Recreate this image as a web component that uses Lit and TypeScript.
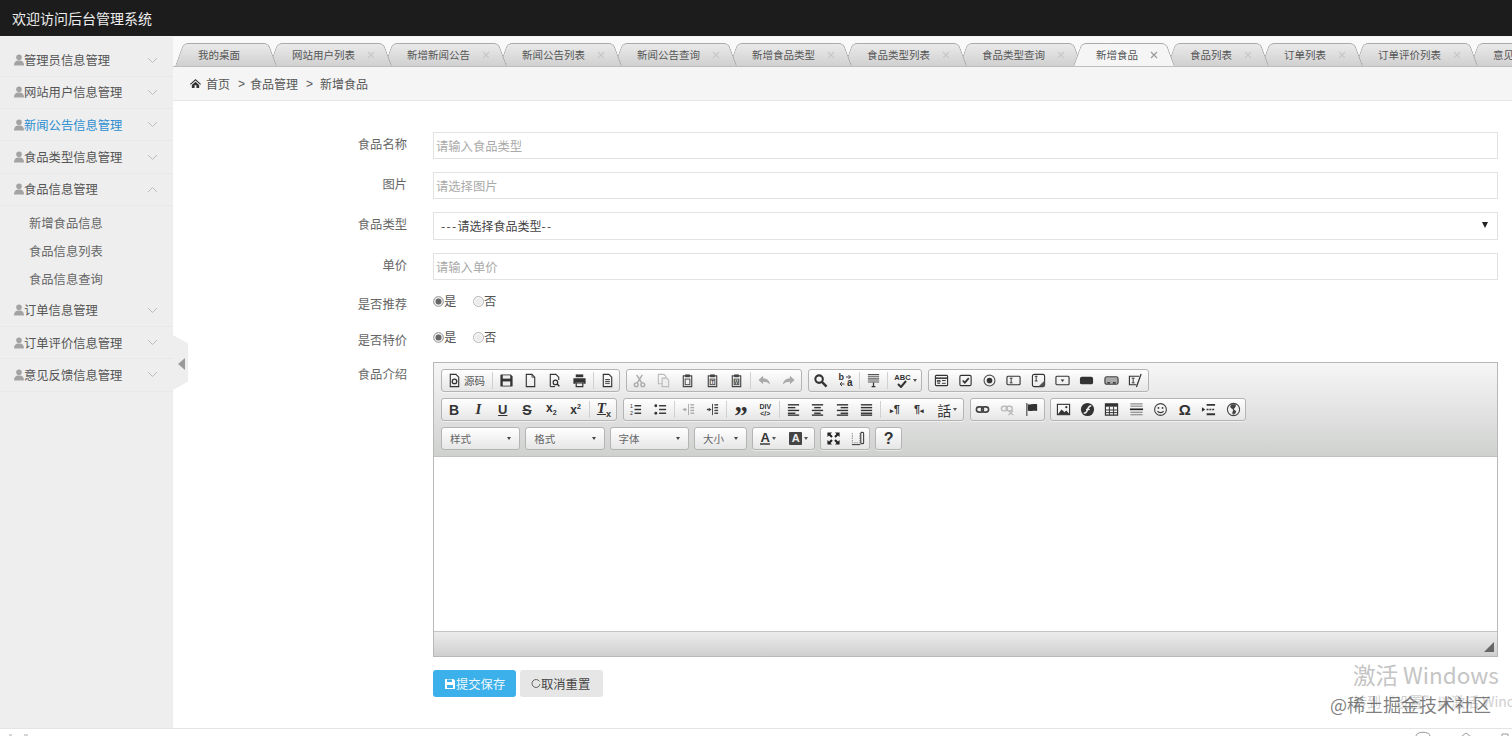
import { LitElement, html, css, svg, unsafeCSS } from 'lit';
import { customElement } from 'lit/decorators.js';

const FONT = unsafeCSS(`"Noto Sans CJK SC", "Liberation Sans", sans-serif`);

const TABS = [
  { label: '我的桌面', close: false },
  { label: '网站用户列表', close: true },
  { label: '新增新闻公告', close: true },
  { label: '新闻公告列表', close: true },
  { label: '新闻公告查询', close: true },
  { label: '新增食品类型', close: true },
  { label: '食品类型列表', close: true },
  { label: '食品类型查询', close: true },
  { label: '新增食品', close: true, active: true },
  { label: '食品列表', close: true },
  { label: '订单列表', close: true },
  { label: '订单评价列表', close: true },
  { label: '意见反馈列表', close: true },
];

const MENU = [
  { label: '管理员信息管理' },
  { label: '网站用户信息管理' },
  { label: '新闻公告信息管理', blue: true },
  { label: '食品类型信息管理' },
  { label: '食品信息管理', open: true, subs: ['新增食品信息', '食品信息列表', '食品信息查询'] },
  { label: '订单信息管理' },
  { label: '订单评价信息管理' },
  { label: '意见反馈信息管理' },
];

const ic = (body: unknown) =>
  html`<svg class="ic" viewBox="0 0 16 16" fill="none" stroke="#333" stroke-width="1.2">${body}</svg>`;

const lines = (rows: [number, number, number][], color = '#333') =>
  rows.map(([x1, x2, y]) => svg`<path d="M${x1} ${y}H${x2}" stroke=${color} stroke-width="1.5" />`);

const clip = (color: string, mark: string) => svg`
  <path d="M3.5 3h9v11.500h-9z" stroke=${color} />
  <rect x="5.500" y="1.500" width="5" height="3" fill=${color} stroke="none" />
  <rect x="5.500" y="6.500" width="5" height="6" stroke=${color} stroke-width="1" />
  <text x="8" y="11.800" font-size="5.500" font-weight="700" text-anchor="middle" fill=${color} stroke="none" font-family="Liberation Sans">${mark}</text>`;

const ICONS: Record<string, unknown> = {
  source: html`${ic(svg`<path d="M3.5 1.500h6l3 3v10h-9z" /><circle cx="8" cy="9" r="2.400" stroke-width="1.400" />`)}<span class="src">源码</span>`,
  save: ic(svg`<path d="M1.500 2.500a1 1 0 0 1 1-1h10l2 2v10a1 1 0 0 1-1 1h-11a1 1 0 0 1-1-1z" fill="#333" stroke="none" /><rect x="4" y="2.500" width="8" height="3.500" fill="#eee" stroke="none" /><rect x="4" y="9" width="8" height="4.500" fill="#eee" stroke="none" />`),
  newpage: ic(svg`<path d="M3.500 1.500h6l3 3v10h-9z" /><path d="M9.500 1.500v3h3" stroke-width=".8" />`),
  preview: ic(svg`<path d="M3.500 14.500v-13h6l3 3v3" /><path d="M3.500 14.500h5" /><circle cx="9" cy="10" r="2.400" stroke-width="1.300" /><path d="m10.800 11.800 2.400 2.400" stroke-width="1.600" />`),
  print: ic(svg`<path d="M4 1.500h8v3H4z" fill="#333" stroke="none" /><path d="M1.500 5.500h13v6h-2.500v-2H4v2H1.500z" fill="#333" stroke="none" /><path d="M4.500 10.500h7v4h-7z" stroke-width="1.300" />`),
  templates: ic(svg`<path d="M3.500 1.500h6l3 3v10h-9z" /><path d="M5.500 7h5M5.500 9h5M5.500 11h5" stroke-width="1" />`),
  cut: ic(svg`<g stroke="#aaa" stroke-width="1.500"><circle cx="4.500" cy="12.500" r="2" /><circle cx="11.500" cy="12.500" r="2" /><path d="M5.500 10.700 11 2M10.500 10.700 5 2" /></g>`),
  copy: ic(svg`<g stroke="#bbb"><path d="M2.500 1.500h6l2 2v8h-8z" /><path d="M6.500 5.500h5l2 2v7h-7z" fill="#eee" /></g>`),
  paste: ic(clip('#444', '')),
  pastetext: ic(clip('#444', 'T')),
  pasteword: ic(clip('#444', 'W')),
  undo: ic(svg`<path d="M6.500 3 1.500 7.500l5 4.500V9.300c3 0 5.200.7 7.500 3-.5-4-3.400-6.600-7.500-6.800z" fill="#aaa" stroke="none" />`),
  redo: ic(svg`<path d="M9.500 3l5 4.500-5 4.500V9.300c-3 0-5.200.7-7.500 3 .5-4 3.400-6.600 7.500-6.800z" fill="#aaa" stroke="none" />`),
  find: ic(svg`<circle cx="6.500" cy="6.500" r="4" stroke-width="2.200" /><path d="m9.500 9.500 5 5" stroke-width="2.600" />`),
  replace: html`<span class="rep"><i>b</i><b>a</b><svg viewBox="0 0 15 15"><path d="M8 4h4.500M10.500 2l2 2-2 2M6.500 11H2M4 9l-2 2 2 2" fill="none" stroke="#444" /></svg></span>`,
  selectall: ic(svg`<path d="M2 1.500h12M2 3.500h12M2 5.500h12M2 7.500h12M2 9.500h12" stroke-width="1.100" stroke="#555" /><path d="M6 14.500h4M8 10v4.500" stroke-width="1.300" />`),
  spell: html`<span class="abc">ABC</span><svg class="chk" viewBox="0 0 12 8"><path d="m2 4 3 3 5-6" fill="none" stroke="#333" stroke-width="2" /></svg><span class="caret"></span>`,
  form: ic(svg`<rect x="1.500" y="2.500" width="13" height="11" rx="1" /><path d="M1.500 5.500h13" stroke-width="1.600" /><path d="M3.500 8h3v1.500h-3zM8.500 8h4M3.500 11h3M8.500 11h4" stroke-width="1" />`),
  checkbox: ic(svg`<rect x="2" y="2.500" width="12" height="11" rx="1.500" /><path d="m5 8 2.300 2.300L11.500 5.500" stroke-width="1.800" />`),
  radio: ic(svg`<circle cx="8" cy="8" r="5.800" stroke="#555" /><circle cx="8" cy="8" r="3" fill="#333" stroke="none" />`),
  textfield: ic(svg`<rect x="1" y="3.500" width="14" height="9" rx="1" /><path d="M4 5.500h3M4 10.500h3M5.500 5.500v5" stroke-width="1" />`),
  textarea: ic(svg`<rect x="1.500" y="1.500" width="13" height="13" rx="2" /><path d="M4 3.500h3M4 8.500h3M5.500 3.500v5" stroke-width="1" /><path d="M8 14.500l6.500-6.500v6.500z" fill="#555" stroke="none" />`),
  select: ic(svg`<rect x="1" y="3.500" width="14" height="9" rx="1" /><path d="M6 7h4l-2 2.500z" fill="#333" stroke="none" />`),
  button: ic(svg`<rect x="1" y="4" width="14" height="8" rx="2" fill="#333" stroke="none" />`),
  imagebutton: ic(svg`<rect x="1" y="4" width="14" height="8" rx="2" stroke="#444" stroke-width="1.300" fill="#aaa" /><path d="M3.500 10.500h3M9.500 10.500h3" stroke="#222" />`),
  hidden: ic(svg`<path d="M12 3.500H1.500v9H9" /><path d="M4 5.500h3M4 10.500h3M5.500 5.500v5" stroke-width="1" /><path d="m9 15 5-14" stroke-width="1.300" />`),
  ol: ic(svg`${lines([[7, 14, 4], [7, 14, 8], [7, 14, 12]])}<text x="2" y="6" font-size="5.500" fill="#333" stroke="none" font-family="Liberation Sans">1</text><text x="2" y="13.500" font-size="5.500" fill="#333" stroke="none" font-family="Liberation Sans">2</text>`),
  ul: ic(svg`${lines([[6.5, 14, 4], [6.5, 14, 8], [6.5, 14, 12]])}<circle cx="3" cy="4" r="1.500" fill="#333" stroke="none" /><circle cx="3" cy="12" r="1.500" fill="#333" stroke="none" />`),
  outdent: ic(svg`<path d="M8 2v12" stroke="#aaa" stroke-width="1" />${lines([[10, 14, 3], [10, 14, 6], [10, 14, 9], [10, 14, 12]], '#aaa')}${lines([[2, 6, 8]], '#aaa')}<path d="M2 8l3-2v4z" fill="#aaa" stroke="none" />`),
  indent: ic(svg`<path d="M8 2v12" stroke="#444" stroke-width="1" />${lines([[10, 14, 3], [10, 14, 6], [10, 14, 9], [10, 14, 12]], '#444')}${lines([[2, 5, 8]], '#444')}<path d="M7 8 4 6v4z" fill="#444" stroke="none" />`),
  quote: html`<span class="g quote">”</span>`,
  div: html`<span class="div">DIV<br />&lt;/&gt;</span>`,
  left: ic(lines([[2, 14, 3], [2, 10, 6], [2, 14, 9], [2, 10, 12]]).concat(lines([[2, 14, 14]]))),
  center: ic(lines([[2, 14, 3], [4.5, 11.5, 6], [2, 14, 9], [4.5, 11.5, 12], [2, 14, 14]])),
  right: ic(lines([[2, 14, 3], [6, 14, 6], [2, 14, 9], [6, 14, 12], [2, 14, 14]])),
  justify: ic(lines([[2, 14, 3], [2, 14, 6], [2, 14, 9], [2, 14, 12], [2, 14, 14]])),
  ltr: html`<span class="g par"><em>▸</em>¶</span>`,
  rtl: html`<span class="g par">¶<em>◂</em></span>`,
  lang: html`<span class="g lang">話</span><span class="caret"></span>`,
  link: ic(svg`<rect x="1.500" y="5.200" width="7.500" height="5.600" rx="2.800" stroke-width="1.700" stroke="#444" /><rect x="7" y="5.200" width="7.500" height="5.600" rx="2.800" stroke-width="1.700" stroke="#444" />`),
  unlink: ic(svg`<g stroke="#bbb"><rect x="1.500" y="4.500" width="6.500" height="5" rx="2.500" stroke-width="1.500" /><rect x="6.500" y="4.500" width="6.500" height="5" rx="2.500" stroke-width="1.500" /><path d="m9 9 5 5M14 9l-5 5" stroke-width="1.500" /></g>`),
  anchor: ic(svg`<path d="M3 1v14" stroke-width="1.300" stroke="#555" /><path d="M4 2c3 1.500 5-.5 10 .5v7c-5-1-7 1-10-.5z" fill="#333" stroke="none" />`),
  image: ic(svg`<rect x="1.500" y="2.500" width="13" height="11" stroke="#333" /><path d="m2 13 4-5 3 3 2-2 3.500 4z" fill="#333" stroke="none" /><circle cx="11" cy="5.500" r="1.200" fill="#333" stroke="none" />`),
  flash: ic(svg`<circle cx="8" cy="8" r="7" fill="#333" stroke="none" /><path d="M4 12c3 0 3-1.500 4-4s1.500-4 4-4" stroke="#eee" stroke-width="1.700" /><path d="M6.500 8h4" stroke="#eee" stroke-width="1.400" />`),
  table: ic(svg`<path d="M1.500 2h13v12h-13z" stroke="#333" /><path d="M1.500 2h13v3h-13z" fill="#333" stroke="none" /><path d="M1.500 8.500h13M1.500 11.300h13M5.800 5v9M10.200 5v9" stroke-width="1" />`),
  hr: ic(svg`${lines([[1.5, 14.5, 2], [1.5, 14.5, 4.5], [1.5, 14.5, 11], [1.5, 14.5, 13.5]], '#999')}<path d="M1 7.800h14" stroke="#222" stroke-width="1.800" />`),
  smiley: ic(svg`<circle cx="8" cy="8" r="6.300" stroke="#444" /><circle cx="5.800" cy="6.300" r="1" fill="#333" stroke="none" /><circle cx="10.200" cy="6.300" r="1" fill="#333" stroke="none" /><path d="M4.800 9.800c1.500 2 5 2 6.400 0" />`),
  omega: html`<span class="g omega">Ω</span>`,
  pagebreak: ic(svg`<path d="M1 5.500 4.500 8 1 10.500z" fill="#333" stroke="none" /><path d="M6 3h9M6 13h9" stroke-width="2" /><path d="M6 8h9" stroke-width="1.500" stroke-dasharray="2 1" />`),
  iframe: ic(svg`<circle cx="8" cy="8" r="6.500" stroke="#444" /><path d="M6 2.500c-2 2-2 3.500 0 4.500s2 2 1 3.500.5 3 1 3c2-1.500 4-3 2-4.500s-2-2-.5-3 1-3 .5-3.500z" fill="#444" stroke="none" />`),
  max: ic(svg`<path d="M1.500 1.500h5l-1.700 1.700 2.400 2.400-1.600 1.600-2.400-2.400-1.700 1.700zM14.500 1.500v5l-1.700-1.700-2.400 2.400-1.600-1.600 2.400-2.400-1.700-1.700zM1.500 14.500v-5l1.700 1.700 2.400-2.400 1.600 1.600-2.400 2.400 1.700 1.700zM14.500 14.500h-5l1.700-1.700-2.400-2.400 1.600-1.600 2.400 2.400 1.700-1.700z" fill="#222" stroke="none" />`),
  blocks: ic(svg`<path d="M2.500 2v10.500h8V2" stroke="#999" stroke-dasharray="1.500 1" /><rect x="11.500" y="1.500" width="3" height="12" rx="1" stroke="#444" /><path d="M2 14.500h9" stroke="#444" />`),
  help: html`<span class="g help">?</span>`,
  color: html`<span class="g tc">A</span><span class="caret"></span>`,
  bgcolor: html`<span class="g bc">A</span><span class="caret"></span>`,
  bold: html`<span class="g bold">B</span>`,
  italic: html`<span class="g italic">I</span>`,
  underline: html`<span class="g under">U</span>`,
  strike: html`<span class="g strike">S</span>`,
  sub: html`<span class="g script">x<sub>2</sub></span>`,
  sup: html`<span class="g script">x<sup>2</sup></span>`,
  clear: html`<span class="g clear">T<sub>x</sub></span>`,
};

const TOOLBAR: string[][][] = [
  [
    ['source', '|', 'save', 'newpage', 'preview', 'print', '|', 'templates'],
    ['cut', 'copy', 'paste', 'pastetext', 'pasteword', '|', 'undo', 'redo'],
    ['find', 'replace', '|', 'selectall', '|', 'spell'],
    ['form', 'checkbox', 'radio', 'textfield', 'textarea', 'select', 'button', 'imagebutton', 'hidden'],
  ],
  [
    ['bold', 'italic', 'underline', 'strike', 'sub', 'sup', '|', 'clear'],
    ['ol', 'ul', '|', 'outdent', 'indent', '|', 'quote', 'div', '|', 'left', 'center', 'right', 'justify', '|', 'ltr', 'rtl', 'lang'],
    ['link', 'unlink', 'anchor'],
    ['image', 'flash', 'table', 'hr', 'smiley', 'omega', 'pagebreak', 'iframe'],
  ],
];

const COMBOS = [
  { label: '样式', small: false },
  { label: '格式', small: false },
  { label: '字体', small: false },
  { label: '大小', small: true },
];

const WIDE: Record<string, string> = { source: 'w-src', spell: 'w-arrow', lang: 'w-arrow', color: 'w-color', bgcolor: 'w-color' };

const floppy = (color: string) =>
  html`<svg class="btn-ic" viewBox="0 0 12 12"><path d="M1 1h8.500L11 2.500V11H1z" fill=${color} /><rect x="3" y="1.500" width="5" height="2.500" fill="#3bb0ea" /><rect x="3" y="7" width="6" height="3" fill="#3bb0ea" /></svg>`;

@customElement('app-root')
export class AppRoot extends LitElement {
  static styles = css`
    :host {
      display: flex;
      flex-direction: column;
      width: 1512px;
      height: 736px;
      overflow: hidden;
      position: relative;
      background: #fff;
      font-family: ${FONT};
      font-size: 12.3px;
      color: #555;
    }
    .top {
      flex: none;
      height: 36px;
      padding-left: 12px;
      border-bottom: 1px solid #f3f3f3;
      background: #1c1c1c;
      color: #eee;
      font-size: 14px;
      line-height: 36px;
    }
    .body {
      flex: 1;
      display: flex;
      min-height: 0;
    }
    .side {
      flex: none;
      width: 173px;
      padding-top: 7.5px;
      background: #eee;
      box-sizing: border-box;
    }
    .item {
      display: flex;
      align-items: center;
      height: 32.33px;
      padding-left: 14px;
      box-sizing: border-box;
      border-bottom: 1px solid #e8e8e8;
      font-size: 12.3px;
      color: #555;
    }
    .item.blue {
      color: #2f8fd0;
    }
    .item .who {
      width: 10px;
      height: 12px;
      flex: none;
    }
    .item .chev {
      width: 11px;
      height: 7px;
      margin-left: auto;
      margin-right: 15px;
      flex: none;
    }
    .subs {
      padding: 2.5px 0 2px;
    }
    .sub {
      height: 28px;
      line-height: 28px;
      padding-left: 29px;
      font-size: 12.3px;
      color: #666;
    }
    .handle {
      position: absolute;
      left: 173px;
      top: 335px;
      width: 15px;
      height: 55px;
      background: #eee;
      clip-path: polygon(0 0, 100% 15%, 100% 85%, 0 100%);
    }
    .handle::after {
      content: '';
      position: absolute;
      left: 5px;
      top: 23px;
      border: 6px solid transparent;
      border-left: 0;
      border-right: 7px solid #9a9a9a;
    }
    .main {
      flex: 1;
      min-width: 0;
      display: flex;
      flex-direction: column;
    }
    .tabs {
      flex: none;
      display: flex;
      height: 30px;
      padding: 6px 0 0 6px;
      box-sizing: border-box;
      overflow: hidden;
      background: #f9f9f9;
      border-bottom: 1px solid #bdbdbd;
    }
    .tab {
      position: relative;
      flex: none;
      height: 24px;
      display: flex;
      align-items: center;
      padding-left: 19px;
      padding-right: 33px;
      font-size: 10.5px;
      color: #555;
      line-height: 24px;
      isolation: isolate;
    }
    .tab::before,
    .tab::after {
      content: '';
      position: absolute;
      top: 0;
      bottom: 0;
      width: 60%;
      z-index: -1;
      box-sizing: border-box;
      border-top: 1px solid #a9a9a9;
      background: linear-gradient(#eaeaea, #cfcfcf);
    }
    .tab::before {
      left: 0;
      border-left: 1px solid #a9a9a9;
      border-top-left-radius: 5px;
      transform: skewX(-20deg);
    }
    .tab::after {
      right: 0;
      border-right: 1px solid #a0a0a0;
      border-top-right-radius: 5px;
      transform: skewX(20deg);
    }
    .tab.active {
      margin-left: -1px;
    }
    .tab.active::before,
    .tab.active::after {
      background: #f5f5f5;
      height: 25px;
    }
    .tab .x {
      position: absolute;
      right: 13px;
      top: 7.5px;
      width: 8px;
      height: 8px;
    }
    .crumbs {
      flex: none;
      display: flex;
      align-items: center;
      height: 34px;
      padding-left: 17px;
      box-sizing: border-box;
      border-bottom: 1px solid #e6e6e6;
      background: #f5f5f5;
      font-size: 12px;
      color: #555;
    }
    .crumbs svg {
      width: 11px;
      height: 11px;
      margin-right: 5px;
    }
    .crumbs .gt {
      margin: 0 5px 0 8px;
      font-family: 'Liberation Sans', sans-serif;
    }
    .crumbs .gt.last {
      margin-right: 7px;
    }
    .form {
      flex: 1;
      padding: 31px 14px 0 0;
      min-height: 0;
    }
    .row {
      display: flex;
      margin-bottom: 13px;
    }
    .row.price {
      margin-bottom: 11px;
    }
    .row.radio {
      height: 20px;
      margin-bottom: 16px;
    }
    .row.radio.last {
      margin-bottom: 15px;
    }
    .label {
      flex: none;
      width: 234px;
      margin-right: 26px;
      text-align: right;
      font-size: 12.3px;
      line-height: 24px;
      color: #666;
    }
    .radio .label {
      line-height: 26px;
    }
    .input {
      flex: 1;
      min-width: 0;
      height: 27px;
      padding: 0 2px;
      box-sizing: border-box;
      border: 1px solid #e2e2e2;
      outline: none;
      font: inherit;
      font-size: 12.3px;
      color: #555;
      background: #fff;
    }
    .input::placeholder {
      color: #aaa;
    }
    .pick {
      flex: 1;
      display: flex;
      align-items: center;
      justify-content: space-between;
      height: 28px;
      padding: 0 9px 2px 7px;
      box-sizing: border-box;
      border: 1px solid #e2e2e2;
      font-size: 12px;
      color: #444;
    }
    .pick .dash {
      letter-spacing: 1.3px;
    }
    .pick::after {
      content: '';
      border: 3.5px solid transparent;
      border-top: 6px solid #222;
      border-bottom: 0;
    }
    .opt {
      display: flex;
      align-items: center;
      width: 40px;
      height: 20px;
      font-size: 12.3px;
      color: #555;
    }
    .dot {
      flex: none;
      width: 11px;
      height: 11px;
      box-sizing: border-box;
      border: 1px solid #b5b5b5;
      border-radius: 50%;
      background: #ececec;
      box-shadow: inset 0 0 0 1px #fff;
    }
    .dot.on {
      background: #666;
      box-shadow: inset 0 0 0 1.5px #eee;
    }
    .editor {
      flex: 1;
      min-width: 0;
      height: 295px;
      display: flex;
      flex-direction: column;
      box-sizing: border-box;
      border: 1px solid #b8b8b8;
    }
    .toolbar {
      flex: none;
      display: flex;
      flex-direction: column;
      gap: 6px;
      height: 94px;
      padding: 6px 0 0 7px;
      box-sizing: border-box;
      border-bottom: 1px solid #c0c0c0;
      background: linear-gradient(#f6f6f6, #cfd1cf);
    }
    .tb-row {
      display: flex;
      gap: 5.5px;
      height: 23px;
    }
    .tb-row.plain {
      gap: 5px;
    }
    .group {
      display: flex;
      align-items: center;
      box-sizing: border-box;
      border: 1px solid #b4b4b4;
      border-radius: 3px;
      background: linear-gradient(#fff, #e6e6e6);
      box-shadow: 0 1px 0 rgba(255, 255, 255, 0.5);
    }
    .btn {
      flex: none;
      display: flex;
      align-items: center;
      justify-content: center;
      width: 24.3px;
      height: 21px;
      font-family: 'Liberation Sans', sans-serif;
      color: #333;
    }
    .btn.w-src {
      width: 48px;
      justify-content: flex-start;
      padding-left: 5px;
      box-sizing: border-box;
    }
    .btn.w-arrow {
      position: relative;
      width: 32px;
    }
    .btn.w-color {
      width: 30.5px;
    }
    .sep {
      flex: none;
      width: 1px;
      height: 17px;
      margin: 0 1.5px;
      background: #d0d0d0;
    }
    .ic {
      width: 15px;
      height: 15px;
      display: block;
    }
    .src {
      margin-left: 2px;
      font-family: ${FONT};
      font-size: 10.5px;
      color: #555;
    }
    .g {
      font-family: 'Liberation Sans', sans-serif;
      color: #333;
      line-height: 1;
    }
    .bold {
      font-weight: 700;
      font-size: 14px;
    }
    .italic {
      font-family: 'Liberation Serif', serif;
      font-style: italic;
      font-weight: 700;
      font-size: 15px;
    }
    .under {
      font-weight: 700;
      font-size: 13px;
      text-decoration: underline;
    }
    .strike {
      font-weight: 700;
      font-size: 14px;
      text-decoration: line-through;
    }
    .script {
      font-weight: 700;
      font-size: 12px;
    }
    .script sub,
    .script sup {
      font-size: 7px;
    }
    .clear {
      font-family: 'Liberation Serif', serif;
      font-style: italic;
      font-weight: 700;
      font-size: 15px;
      text-decoration: underline;
    }
    .clear sub {
      font-size: 9px;
      font-style: normal;
      font-family: 'Liberation Sans', sans-serif;
    }
    .quote {
      font-family: 'Liberation Serif', serif;
      font-weight: 700;
      font-size: 27px;
      height: 13px;
    }
    .div {
      font-size: 7px;
      font-weight: 700;
      line-height: 7px;
      text-align: center;
      color: #333;
    }
    .par {
      font-weight: 700;
      font-size: 11px;
    }
    .par em {
      font-style: normal;
      font-size: 7px;
    }
    .lang {
      font-family: ${FONT};
      font-size: 14px;
    }
    .omega {
      font-weight: 700;
      font-size: 15px;
    }
    .help {
      font-weight: 700;
      font-size: 16px;
    }
    .tc {
      font-weight: 700;
      font-size: 13px;
      border-bottom: 2px solid #666;
      line-height: 11px;
    }
    .bc {
      font-weight: 700;
      font-size: 11px;
      line-height: 13px;
      width: 13px;
      text-align: center;
      background: #444;
      color: #eee;
      border-radius: 1px;
    }
    .abc {
      font-size: 7.5px;
      font-weight: 700;
      position: relative;
      top: -3px;
    }
    .chk {
      position: absolute;
      width: 12px;
      height: 8px;
      margin: 6px 6px 0 0;
    }
    .caret {
      flex: none;
      margin-left: 2px;
      border: 2.5px solid transparent;
      border-top: 3px solid #555;
      border-bottom: 0;
    }
    .rep {
      position: relative;
      width: 15px;
      height: 15px;
      font-size: 9px;
      line-height: 9px;
      font-family: 'Liberation Sans', sans-serif;
      color: #333;
    }
    .rep svg {
      position: absolute;
      inset: 0;
    }
    .rep i {
      position: absolute;
      left: 1px;
      top: 0;
      font-style: normal;
      font-weight: 700;
    }
    .rep b {
      position: absolute;
      right: 0;
      bottom: 1px;
      font-size: 10px;
      font-weight: 700;
    }
    .combo {
      flex: none;
      display: flex;
      align-items: center;
      justify-content: space-between;
      width: 79.3px;
      height: 23px;
      padding: 0 8px;
      box-sizing: border-box;
      border: 1px solid #b4b4b4;
      border-radius: 3px;
      background: linear-gradient(#fff, #e6e6e6);
      font-size: 10.5px;
      color: #666;
    }
    .combo.small {
      width: 53px;
    }
    .combo .caret {
      border-top-color: #444;
    }
    .content {
      flex: 1;
      background: #fff;
    }
    .status {
      flex: none;
      height: 25px;
      display: flex;
      align-items: flex-end;
      justify-content: flex-end;
      padding: 0 3px 4px 0;
      box-sizing: border-box;
      border-top: 1px solid #c4c4c4;
      background: linear-gradient(#ececec, #cfcfcf);
    }
    .status svg {
      width: 10px;
      height: 10px;
    }
    .actions {
      display: flex;
      gap: 4px;
      margin: 1px 0 0 260px;
    }
    .act {
      display: flex;
      align-items: center;
      height: 27px;
      width: 83px;
      padding-left: 11px;
      box-sizing: border-box;
      border-radius: 3px;
      background: #3bb0ea;
      color: #f0f8fd;
      font-size: 12.3px;
    }
    .act.reset {
      background: #e6e6e6;
      color: #444;
    }
    .btn-ic {
      width: 12px;
      height: 12px;
      flex: none;
    }
    .act.reset .btn-ic {
      width: 10px;
      height: 10px;
    }
    .foot {
      flex: none;
      height: 8px;
      display: flex;
      justify-content: space-between;
      overflow: hidden;
      border-top: 1px solid #e4e4e4;
      background: #fff;
      box-sizing: border-box;
    }
    .foot svg {
      flex: none;
      display: block;
      height: 7px;
    }
    .mark {
      position: absolute;
      left: 1353px;
      top: 658px;
      width: 240px;
      color: #c4c4c4;
      font-family: ${FONT};
      font-size: 22.5px;
      line-height: 32px;
      white-space: nowrap;
      pointer-events: none;
    }
    .mark small {
      display: block;
      margin-top: 2px;
      font-size: 14px;
      line-height: 18px;
      color: #cfcfcf;
    }
    .juejin {
      position: absolute;
      left: 1330px;
      top: 691px;
      font-family: ${FONT};
      font-size: 18px;
      line-height: 26px;
      color: rgba(70, 70, 70, 0.7);
      white-space: nowrap;
      pointer-events: none;
    }
  `;

  private who() {
    return html`<svg class="who" viewBox="0 0 10 12"><circle cx="5" cy="3.200" r="2.800" fill="#a3a3a3" /><path d="M0 11.500c0-3 1.500-4.500 3.500-5h3c2 .5 3.500 2 3.500 5z" fill="#a3a3a3" /></svg>`;
  }

  private chev(open: boolean) {
    return html`<svg class="chev" viewBox="0 0 11 7"><path d=${open ? 'M1 6l4.500-4.500L10 6' : 'M1 1l4.500 4.500L10 1'} fill="none" stroke="#bcbcbc" /></svg>`;
  }

  private renderMenu() {
    return MENU.map(
      (m) => html`
        <div class="item ${m.blue ? 'blue' : ''}">${this.who()}<span>${m.label}</span>${this.chev(!!m.open)}</div>
        ${m.subs ? html`<div class="subs">${m.subs.map((s) => html`<div class="sub">${s}</div>`)}</div>` : ''}
      `,
    );
  }

  private renderTabs() {
    return TABS.map(
      (t, i) => html`<div class="tab ${t.active ? 'active' : ''}" style="z-index:${t.active ? 50 : 40 - i}">
        <span>${t.label}</span>
        ${t.close
          ? html`<svg class="x" viewBox="0 0 8 8"><path d="m1 1 6 6M7 1 1 7" stroke=${t.active ? '#9a9a9a' : '#c8c8c8'} stroke-width="1.200" /></svg>`
          : ''}
      </div>`,
    );
  }

  private renderToolbar() {
    return html`<div class="toolbar">
      ${TOOLBAR.map(
        (row) => html`<div class="tb-row">
          ${row.map(
            (group) => html`<div class="group">
              ${group.map((name) =>
                name === '|'
                  ? html`<span class="sep"></span>`
                  : html`<span class="btn ${WIDE[name] ?? ''}">${ICONS[name]}</span>`,
              )}
            </div>`,
          )}
        </div>`,
      )}
      <div class="tb-row plain">
        ${COMBOS.map(
          (c) => html`<div class="combo ${c.small ? 'small' : ''}"><span>${c.label}</span><span class="caret"></span></div>`,
        )}
        <div class="group"><span class="btn w-color">${ICONS.color}</span><span class="btn w-color">${ICONS.bgcolor}</span></div>
        <div class="group"><span class="btn">${ICONS.max}</span><span class="btn">${ICONS.blocks}</span></div>
        <div class="group"><span class="btn">${ICONS.help}</span></div>
      </div>
    </div>`;
  }

  private renderForm() {
    return html`<div class="form">
      <div class="row"><div class="label">食品名称</div><input class="input" placeholder="请输入食品类型" /></div>
      <div class="row"><div class="label">图片</div><input class="input" placeholder="请选择图片" /></div>
      <div class="row"><div class="label">食品类型</div><div class="pick"><span><span class="dash">---</span>请选择食品类型<span class="dash">--</span></span></div></div>
      <div class="row price"><div class="label">单价</div><input class="input" placeholder="请输入单价" /></div>
      <div class="row radio">
        <div class="label">是否推荐</div>
        <label class="opt"><span class="dot on"></span>是</label>
        <label class="opt"><span class="dot"></span>否</label>
      </div>
      <div class="row radio last">
        <div class="label">是否特价</div>
        <label class="opt"><span class="dot on"></span>是</label>
        <label class="opt"><span class="dot"></span>否</label>
      </div>
      <div class="row">
        <div class="label">食品介绍</div>
        <div class="editor">
          ${this.renderToolbar()}
          <div class="content"></div>
          <div class="status"><svg viewBox="0 0 10 10"><path d="M10 0v10H0z" fill="#666" /></svg></div>
        </div>
      </div>
      <div class="actions">
        <div class="act">${floppy('#fff')}<span>提交保存</span></div>
        <div class="act reset">
          <svg class="btn-ic" viewBox="0 0 10 10"><path d="M8.500 2.500A4 4 0 1 0 9 5" fill="none" stroke="#555" stroke-width=".9" /></svg>
          <span>取消重置</span>
        </div>
      </div>
    </div>`;
  }

  render() {
    return html`
      <div class="top">欢迎访问后台管理系统</div>
      <div class="body">
        <nav class="side">${this.renderMenu()}</nav>
        <main class="main">
          <div class="tabs">${this.renderTabs()}</div>
          <div class="crumbs">
            <svg viewBox="0 0 12 12"><path d="M6 1 0 6.500l.8.8L6 2.700l5.200 4.600.8-.8zM2 7.500V11h3V8h2v3h3V7.500L6 4z" fill="#333" /></svg>
            <span>首页</span><span class="gt">&gt;</span><span>食品管理</span><span class="gt last">&gt;</span><span>新增食品</span>
          </div>
          ${this.renderForm()}
        </main>
      </div>
      <div class="foot">
        <svg width="40" viewBox="0 0 40 7"><path d="M9 6h3M24 6h4" stroke="#aaa" /></svg>
        <svg width="100" viewBox="0 0 100 7"><path d="M4 7c0-5 14-5 14 0M50 7l4-3 4 3M90 7V5h6v2" fill="none" stroke="#999" /></svg>
      </div>
      <div class="handle"></div>
      <div class="mark">激活 Windows<small>转到“设置”以激活 Windows。</small></div>
      <div class="juejin">@稀土掘金技术社区</div>
    `;
  }
}
